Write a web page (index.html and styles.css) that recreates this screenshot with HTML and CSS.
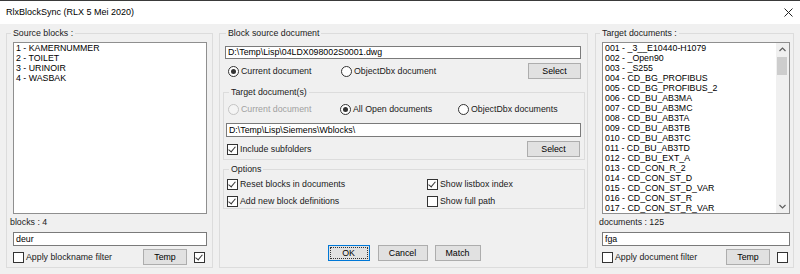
FILE: index.html
```html
<!DOCTYPE html>
<html lang="en">
<head>
    <meta charset="UTF-8">
    <meta name="viewport" content="width=device-width, initial-scale=1.0">
    <title>RlxBlockSync</title>
    <link rel="stylesheet" href="styles.css">
</head>

<body>
    <div class="window">
        <div class="titlebar">
            <span class="title">RlxBlockSync (RLX 5 Mei 2020)</span>
            <svg class="close" width="9" height="9" viewBox="0 0 9 9">
                <path d="M0.5 0.5L8.5 8.5M8.5 0.5L0.5 8.5" stroke="#222" stroke-width="1"/>
            </svg>
        </div>

        <div class="main">
            <!-- left: blocks in the source document -->
            <fieldset class="group source">
                <legend>Source blocks :</legend>
                <div class="listbox">
                    <div class="items">
                        <div>1 - KAMERNUMMER</div>
                        <div>2 - TOILET</div>
                        <div>3 - URINOIR</div>
                        <div>4 - WASBAK</div>
                    </div>
                </div>
                <div class="count">blocks : 4</div>
                <div class="textbox">deur</div>
                <div class="filter-row">
                    <span class="option"><span class="check"></span>Apply blockname filter</span>
                    <button class="btn temp">Temp</button>
                    <span class="check on"></span>
                </div>
            </fieldset>

            <!-- middle: source / target settings -->
            <fieldset class="group middle">
                <legend>Block source document</legend>
                <div class="textbox path">D:\Temp\Lisp\04LDX098002S0001.dwg</div>
                <div class="radio-row source-row">
                    <span class="option w1"><span class="radio on"></span>Current document</span>
                    <span class="option"><span class="radio"></span>ObjectDbx document</span>
                    <button class="btn select">Select</button>
                </div>

                <fieldset class="subgroup target">
                    <legend>Target document(s)</legend>
                    <div class="radio-row">
                        <span class="option w2 disabled"><span class="radio"></span>Current document</span>
                        <span class="option w3"><span class="radio on"></span>All Open documents</span>
                        <span class="option"><span class="radio"></span>ObjectDbx documents</span>
                    </div>
                    <div class="textbox folder">D:\Temp\Lisp\Siemens\Wblocks\</div>
                    <div class="sub-row">
                        <span class="option"><span class="check on"></span>Include subfolders</span>
                        <button class="btn select">Select</button>
                    </div>
                </fieldset>

                <fieldset class="subgroup options">
                    <legend>Options</legend>
                    <div class="option-grid">
                        <span class="option"><span class="check on"></span>Reset blocks in documents</span>
                        <span class="option"><span class="check on"></span>Show listbox index</span>
                        <span class="option"><span class="check on"></span>Add new block definitions</span>
                        <span class="option"><span class="check"></span>Show full path</span>
                    </div>
                </fieldset>

                <div class="actions">
                    <button class="btn ok"><span>OK</span></button>
                    <button class="btn cancel">Cancel</button>
                    <button class="btn match">Match</button>
                </div>
            </fieldset>

            <!-- right: target documents -->
            <fieldset class="group targets">
                <legend>Target documents :</legend>
                <div class="listbox">
                    <div class="items">
                        <div>001 - _3__E10440-H1079</div>
                        <div>002 - _Open90</div>
                        <div>003 - _S255</div>
                        <div>004 - CD_BG_PROFIBUS</div>
                        <div>005 - CD_BG_PROFIBUS_2</div>
                        <div>006 - CD_BU_AB3MA</div>
                        <div>007 - CD_BU_AB3MC</div>
                        <div>008 - CD_BU_AB3TA</div>
                        <div>009 - CD_BU_AB3TB</div>
                        <div>010 - CD_BU_AB3TC</div>
                        <div>011 - CD_BU_AB3TD</div>
                        <div>012 - CD_BU_EXT_A</div>
                        <div>013 - CD_CON_R_2</div>
                        <div>014 - CD_CON_ST_D</div>
                        <div>015 - CD_CON_ST_D_VAR</div>
                        <div>016 - CD_CON_ST_R</div>
                        <div>017 - CD_CON_ST_R_VAR</div>
                    </div>
                    <div class="scrollbar">
                        <svg class="arrow" width="13" height="13" viewBox="0 0 13 13">
                            <path d="M3.5 8L6.5 5L9.5 8" fill="none" stroke="#606060" stroke-width="1.2"/>
                        </svg>
                        <div class="thumb"></div>
                        <div class="track"></div>
                        <svg class="arrow" width="13" height="13" viewBox="0 0 13 13">
                            <path d="M3.5 5L6.5 8L9.5 5" fill="none" stroke="#606060" stroke-width="1.2"/>
                        </svg>
                    </div>
                </div>
                <div class="count">documents : 125</div>
                <div class="textbox">fga</div>
                <div class="filter-row">
                    <span class="option"><span class="check"></span>Apply document filter</span>
                    <button class="btn temp">Temp</button>
                    <span class="check"></span>
                </div>
            </fieldset>
        </div>
    </div>
</body>
</html>
```

FILE: styles.css
```css
* { box-sizing: border-box; }
body {
    margin: 0;
    background: #f0f0f0;
    font-family: "Liberation Sans", Arial, sans-serif;
    font-size: 8.8px;
    color: #1a1a1a;
}
.window {
    width: 800px;
    height: 274px;
    display: flex;
    flex-direction: column;
    overflow: hidden;
}
.titlebar {
    height: 24px;
    flex: none;
    background: #fff;
    border-top: 1px solid #3a3a3a;
    display: flex;
    align-items: center;
    justify-content: space-between;
    padding: 0 7px 1px 6px;
}
.title { font-size: 9px; color: #000; }

.main {
    flex: 1;
    display: flex;
    padding: 4px 6px 6px 6px;
}

/* group boxes */
.group, .subgroup {
    margin: 0;
    min-width: 0;
    border: 1px solid #dcdcdc;
    display: flex;
    flex-direction: column;
}
legend {
    padding: 0 2px;
    line-height: 10px;
    height: 10px;
}
.group { height: 240px; }
.source { width: 207px; padding: 0 5px 0 6px; }
.source legend, .targets legend { margin-left: -2px; }
.middle { width: 369px; margin: 0 7px 0 6px; padding: 0 2px 6px 3px; }
.middle > legend { margin-left: 3px; }
.targets { width: 199px; padding: 0 3px 0 6px; }

/* list boxes */
.listbox {
    margin-top: 4px;
    height: 172px;
    background: #fff;
    border: 1px solid #8f8f8f;
    display: flex;
    overflow: hidden;
}
.items {
    flex: 1;
    padding: 0 2px;
    line-height: 10px;
    white-space: nowrap;
    color: #000;
}
.scrollbar {
    width: 13px;
    background: #f0f0f0;
    display: flex;
    flex-direction: column;
}
.thumb {
    height: 18px;
    margin: 1px 2px 0 1px;
    background: #cdcdcd;
}
.track { flex: 1; }

.count {
    margin: 3px 0 0 -3px;
    line-height: 10px;
}
.textbox {
    margin-top: 5px;
    height: 14px;
    background: #fff;
    border: 1px solid #7a7a7a;
    padding: 0 2px;
    line-height: 12px;
    color: #000;
    white-space: nowrap;
}

.filter-row {
    margin-top: 3px;
    height: 16px;
    display: flex;
    align-items: center;
}
.filter-row .temp { margin-left: auto; margin-right: 7px; width: 44px; }
.filter-row > .check { margin-right: 2px; }

/* buttons */
.btn {
    height: 16px;
    padding: 0;
    border: 1px solid #adadad;
    background: #e1e1e1;
    font: inherit;
    color: #000;
    flex: none;
}
.select { width: 53px; margin-left: auto; margin-right: 1px; }
.ok { width: 42px; border-color: #0078d7; padding: 1px; }
.ok span {
    display: block;
    height: 100%;
    line-height: 10px;
    border: 1px dotted #333;
}
.cancel { width: 50px; }
.match { width: 46px; }

/* check boxes and radios */
.option {
    display: flex;
    align-items: center;
    white-space: nowrap;
    line-height: 11px;
}
.check, .radio {
    width: 11px;
    height: 11px;
    flex: none;
    background: #fff;
    border: 1px solid #333;
    margin-right: 2px;
    position: relative;
}
.check.on::after {
    content: "";
    position: absolute;
    left: 2px;
    top: 0px;
    width: 3px;
    height: 6px;
    border: solid #333;
    border-width: 0 1px 1px 0;
    transform: rotate(40deg);
}
.radio { border-radius: 50%; }
.radio.on::after {
    content: "";
    position: absolute;
    left: 2px;
    top: 2px;
    width: 5px;
    height: 5px;
    border-radius: 50%;
    background: #333;
}
.disabled { color: #a0a0a0; }
.disabled .radio { border-color: #c4c4c4; background: #f4f4f4; }

/* middle column */
.path { margin: 8px 4px 0 2px; height: 13px; line-height: 11px; }
.radio-row {
    display: flex;
    align-items: center;
}
.source-row { margin: 4px 0 0 5px; height: 16px; }
.source-row .select { margin-right: 4px; }
.w1 { width: 113px; }
.w2 { width: 112px; }
.w3 { width: 118px; }

.subgroup { padding: 0 3px 2px 3px; }
.subgroup legend { margin-left: 2px; }
.target { margin-top: 8px; }
.target .radio-row { margin: 7px 0 0 1px; height: 11px; }
.folder { margin: 8px 0 0 -1px; }
.sub-row {
    margin-top: 4px;
    height: 16px;
    display: flex;
    align-items: center;
}
.options { margin-top: 4px; padding-top: 5px; padding-bottom: 1px; }
.option-grid {
    display: grid;
    grid-template-columns: 200px auto;
    row-gap: 6px;
}

.actions {
    margin-top: auto;
    display: flex;
    justify-content: center;
    gap: 7px;
}
.ok { margin-right: 1px; }
```
